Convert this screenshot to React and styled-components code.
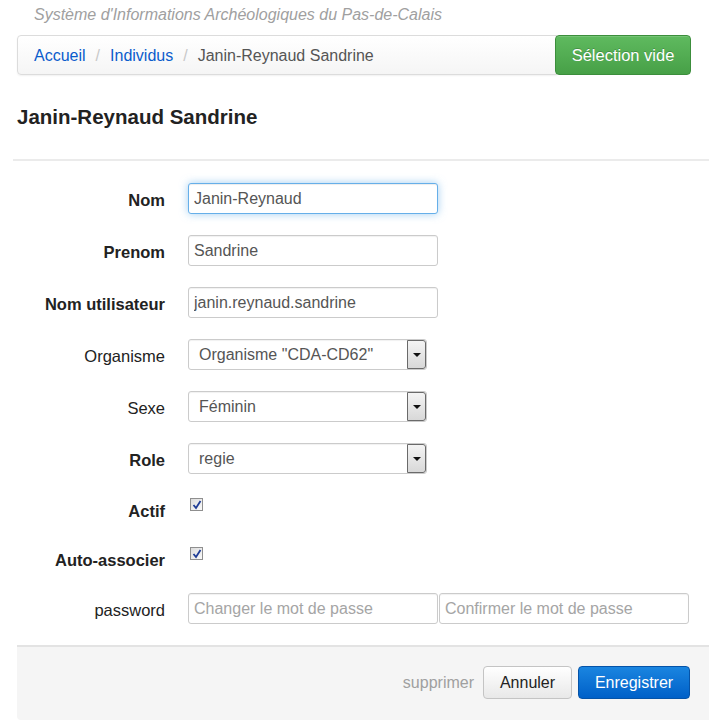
import React from 'react';
import styled, { createGlobalStyle, css } from 'styled-components';

const GlobalStyle = createGlobalStyle`
    html, body {
        margin: 0;
        padding: 0;
        background: #fff;
        font-family: "Liberation Sans", Arial, sans-serif;
        font-size: 16px;
        color: #333;
    }
    * { box-sizing: border-box; }
`;

// styled components
const Page = styled.div`
    width: 709px;
    padding-left: 17px;
    overflow: hidden;
`;

const Subtitle = styled.div`
    font-style: italic;
    color: #a0a0a0;
    padding: 5px 0 0 17px;
    height: 35px;
    line-height: 20px;
`;

const TopBar = styled.div`
    display: flex;
    align-items: stretch;
    height: 40px;
`;

const Breadcrumb = styled.ol`
    display: flex;
    align-items: center;
    width: 540px;
    margin: 0;
    padding: 1px 0 0 16px;
    list-style: none;
    background: linear-gradient(#fff, #f5f5f5);
    border: 1px solid #dcdcdc;
    border-radius: 4px 0 0 4px;
    box-shadow: inset 0 1px 0 #fff, 0 1px 2px rgba(0, 0, 0, 0.06);
`;

const Crumb = styled.li`
    color: ${p => (p.$active ? '#555' : '#0b5ccc')};
    &:not(:first-child)::before {
        content: '/';
        color: #c8c8c8;
        padding: 0 10px;
    }
`;

const GreenButton = styled.button`
    width: 136px;
    margin-left: -2px;
    font: inherit;
    font-size: 16.5px;
    color: #fff;
    text-shadow: 0 -1px 0 rgba(0, 0, 0, 0.2);
    background: linear-gradient(#5fba5f, #47a047);
    border: 1px solid #3c8e3c;
    border-radius: 4px;
    box-shadow: inset 0 1px 0 rgba(255, 255, 255, 0.15);
`;

const Heading = styled.h1`
    margin: 0;
    padding-top: 30px;
    height: 84px;
    font-size: 20.5px;
    font-weight: bold;
    color: #222;
    line-height: 24px;
`;

const Divider = styled.hr`
    margin: 0 0 22px -4px;
    border: 0;
    border-top: 2px solid #ebebeb;
`;

const Form = styled.form`
    display: flex;
    flex-direction: column;
    gap: 21px;
`;

const Row = styled.div`
    display: flex;
    align-items: ${p => (p.$check ? 'flex-start' : 'center')};
    min-height: ${p => (p.$check ? '28px' : '31px')};
`;

const Label = styled.label`
    width: 148px;
    margin-right: 23px;
    text-align: right;
    font-size: 16.5px;
    color: #222;
    font-weight: ${p => (p.$bold ? 'bold' : 'normal')};
    ${p => p.$check && css`padding-top: 7px;`}
    ${p => !p.$check && css`padding-top: 3px;`}
`;

const inputBase = css`
    height: 31px;
    font: inherit;
    color: #555;
    background: #fff;
    border: 1px solid #cbcbcb;
    border-radius: 3px;
    box-shadow: inset 0 1px 1px rgba(0, 0, 0, 0.06);
`;

const TextInput = styled.input`
    ${inputBase}
    width: 250px;
    padding: 0 5px;
    outline: none;
    &::placeholder { color: #a5a5a5; }
    ${p => p.$focus && css`
        border-color: #66afe9;
        box-shadow: inset 0 1px 1px rgba(0, 0, 0, 0.075), 0 0 8px rgba(102, 175, 233, 0.6);
    `}
`;

const PasswordPair = styled.div`
    display: flex;
    gap: 1px;
`;

const SelectBox = styled.div`
    ${inputBase}
    position: relative;
    width: 239px;
    padding: 0 0 0 10px;
    display: flex;
    align-items: center;
`;

const SelectArrow = styled.span`
    position: absolute;
    top: 0;
    right: 0;
    bottom: 0;
    width: 19px;
    border: 1px solid #6a6a6a;
    border-radius: 0 3px 3px 0;
    background: linear-gradient(#f4f4f4, #d8d8d8);
    display: flex;
    align-items: center;
    justify-content: center;
    &::after {
        content: '';
        border-left: 4px solid transparent;
        border-right: 4px solid transparent;
        border-top: 4px solid #111;
    }
`;

const CheckBox = styled.span`
    width: 13px;
    height: 13px;
    margin: 3px 0 0 2px;
    border: 1px solid #8f8f8f;
    background: linear-gradient(135deg, #dcdcdc, #fafafa);
    display: flex;
    align-items: center;
    justify-content: center;
`;

const Footer = styled.div`
    display: flex;
    justify-content: flex-end;
    align-items: center;
    gap: 6px;
    height: 75px;
    margin-top: 21px;
    padding: 0 19px 2px 0;
    background: #f5f5f5;
    border-top: 2px solid #e3e3e3;
    border-radius: 0 0 0 4px;
`;

const DeleteLink = styled.span`
    color: #a0a0a0;
    margin-right: 3px;
`;

const Button = styled.button`
    height: 33px;
    width: ${p => p.$width}px;
    padding: 0;
    font: inherit;
    border-radius: 4px;
    ${p => (p.$primary
        ? css`
            color: #fff;
            background: linear-gradient(#1a85e0, #0060c8);
            border: 1px solid #0553a8;
        `
        : css`
            color: #222;
            background: linear-gradient(#fff, #e8e8e8);
            border: 1px solid #c4c4c4;
        `)}
`;

// presentational components
const Check = () => (
    <CheckBox>
        <svg width="10" height="10" viewBox="0 0 10 10">
            <path d="M1.5 5 L4 8 L8.5 1" fill="none" stroke="#1e3c96" strokeWidth="1.8" />
        </svg>
    </CheckBox>
);

const Select = ({ value }) => (
    <SelectBox>
        {value}
        <SelectArrow />
    </SelectBox>
);

export default function App() {
    return (
        <Page>
            <GlobalStyle />
            <Subtitle>Système d'Informations Archéologiques du Pas-de-Calais</Subtitle>
            <TopBar>
                <Breadcrumb>
                    <Crumb>Accueil</Crumb>
                    <Crumb>Individus</Crumb>
                    <Crumb $active>Janin-Reynaud Sandrine</Crumb>
                </Breadcrumb>
                <GreenButton>Sélection vide</GreenButton>
            </TopBar>
            <Heading>Janin-Reynaud Sandrine</Heading>
            <Divider />
            <Form>
                <Row>
                    <Label $bold>Nom</Label>
                    <TextInput $focus defaultValue="Janin-Reynaud" />
                </Row>
                <Row>
                    <Label $bold>Prenom</Label>
                    <TextInput defaultValue="Sandrine" />
                </Row>
                <Row>
                    <Label $bold>Nom utilisateur</Label>
                    <TextInput defaultValue="janin.reynaud.sandrine" />
                </Row>
                <Row>
                    <Label>Organisme</Label>
                    <Select value={'Organisme "CDA-CD62"'} />
                </Row>
                <Row>
                    <Label>Sexe</Label>
                    <Select value="Féminin" />
                </Row>
                <Row>
                    <Label $bold>Role</Label>
                    <Select value="regie" />
                </Row>
                <Row $check>
                    <Label $bold $check>Actif</Label>
                    <Check />
                </Row>
                <Row $check>
                    <Label $bold $check>Auto-associer</Label>
                    <Check />
                </Row>
                <Row>
                    <Label>password</Label>
                    <PasswordPair>
                        <TextInput placeholder="Changer le mot de passe" />
                        <TextInput placeholder="Confirmer le mot de passe" />
                    </PasswordPair>
                </Row>
            </Form>
            <Footer>
                <DeleteLink>supprimer</DeleteLink>
                <Button $width={89}>Annuler</Button>
                <Button $primary $width={112}>Enregistrer</Button>
            </Footer>
        </Page>
    );
}
